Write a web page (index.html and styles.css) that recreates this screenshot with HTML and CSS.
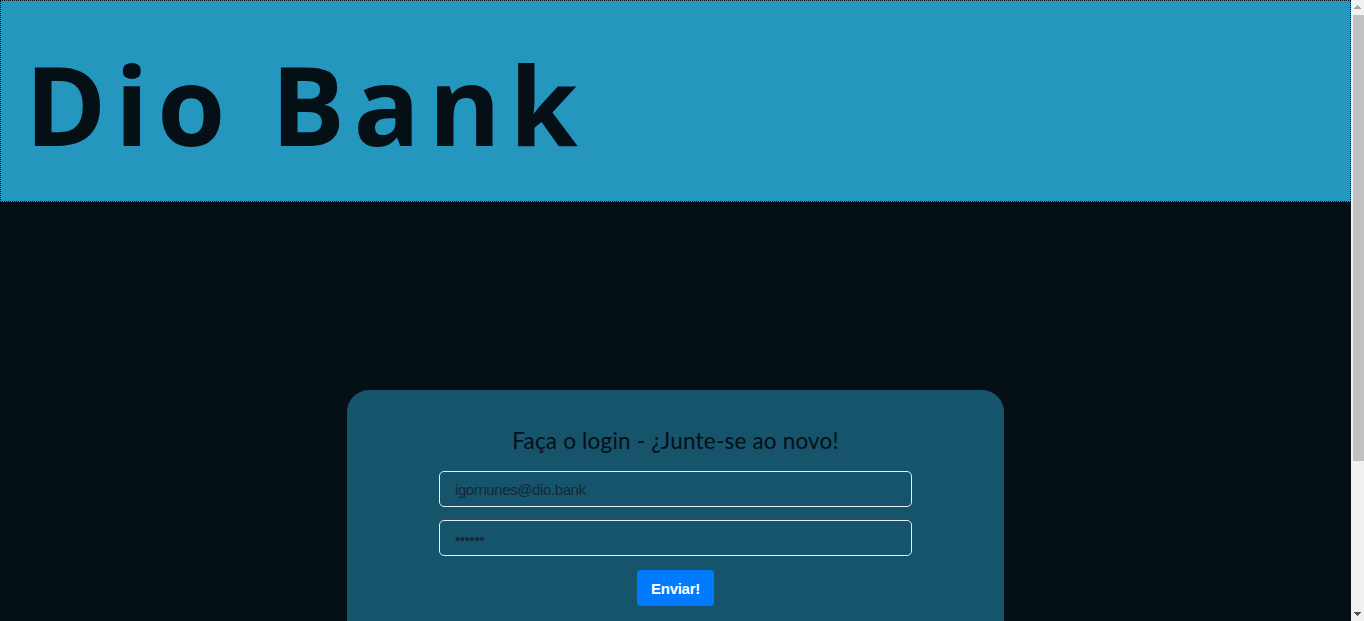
FILE: index.html
```html
<!DOCTYPE html>
<html lang="pt-BR">
<head>
<meta charset="utf-8">
<title>Dio Bank</title>
<link rel="stylesheet" href="styles.css">
</head>
<body>
<header class="topbar">
  <h1 class="brand">Dio Bank</h1>
</header>
<main class="main">
  <section class="card">
    <h2 class="card-title">Faça o login - ¿Junte-se ao novo!</h2>
    <form class="login-form">
      <input class="field" type="email" placeholder="igornunes@dio.bank">
      <input class="field" type="password" placeholder="••••••">
      <button class="submit" type="button">Enviar!</button>
    </form>
  </section>
</main>
</body>
</html>
```
FILE: styles.css
```css
html {
  margin: 0;
  padding: 0;
  background:
    conic-gradient(from 139deg at 50% 0, #a3a3a3 82deg, transparent 0) right 3px top 5px / 7px 4px no-repeat fixed,
    conic-gradient(from -41deg at 50% 100%, #505050 82deg, transparent 0) right 3px bottom 5px / 7px 4px no-repeat fixed,
    linear-gradient(#c1c1c1, #c1c1c1) right 0 top 15px / 11px 446px no-repeat fixed,
    linear-gradient(#f1f1f1, #f1f1f1) right 0 top 0 / 13px 100% no-repeat fixed,
    #040f16;
}
body {
  margin: 0 13px 0 0;
  padding: 0;
  background: #040f16;
  font-family: "Lato", "Noto Sans", sans-serif;
}
.topbar {
  background: #2596be;
  border: 1px dotted #040f16;
  height: 200px;
  padding: 0 0 0 24px;
  box-sizing: content-box;
}
.brand {
  margin: 0;
  padding-top: 47px;
  font-family: "Open Sans", "DejaVu Sans", sans-serif;
  font-size: 110px;
  line-height: 1;
  font-weight: 700;
  letter-spacing: 8.6px;
  color: #040f16;
}
.main {
  display: flex;
  justify-content: center;
  padding: 188px 0 0 0;
  height: 600px;
}
.card {
  width: 657px;
  background: #16546b;
  border-radius: 22px 22px 0 0;
  display: flex;
  flex-direction: column;
  align-items: center;
  padding-top: 37px;
}
.card-title {
  margin: 0 0 17px;
  font-size: 22.5px;
  font-weight: 400;
  color: #040f16;
  letter-spacing: 0.2px;
}
.login-form {
  display: flex;
  flex-direction: column;
  align-items: center;
  gap: 13px;
}
.field {
  width: 473px;
  height: 36px;
  box-sizing: border-box;
  background: transparent;
  border: 1px solid #e6eef2;
  border-radius: 5px;
  padding: 0 15px;
  font-family: "Liberation Sans", Arial, sans-serif;
  font-size: 15px;
  letter-spacing: -0.4px;
  color: #14293a;
}
.field::placeholder {
  color: #14293a;
  opacity: 1;
}
.submit {
  margin-top: 1px;
  width: 77px;
  height: 36px;
  background: #007bff;
  border: none;
  border-radius: 4px;
  color: #ffffff;
  font-family: "Liberation Sans", Arial, sans-serif;
  font-weight: 700;
  font-size: 15px;
  letter-spacing: -0.3px;
}
```
